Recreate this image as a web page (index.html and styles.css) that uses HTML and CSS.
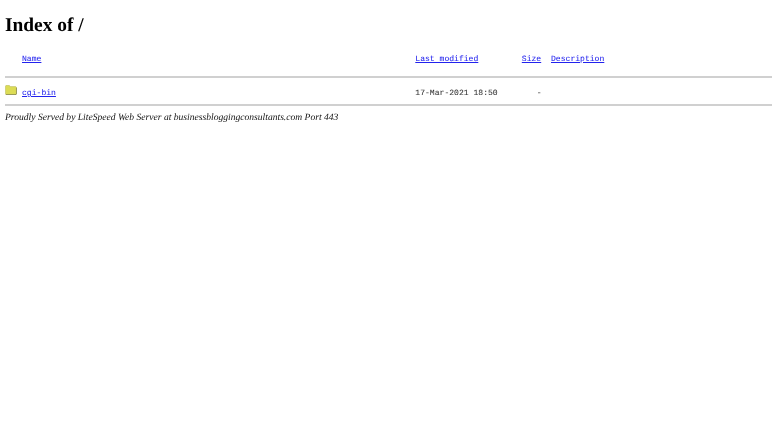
FILE: index.html
```html
<!DOCTYPE html>
<html lang="en">
<head>
<meta charset="utf-8">
<title>Index of /</title>
<link rel="stylesheet" href="styles.css">
</head>
<body>
<h1 class="title">Index of /</h1>
<div class="row head">
  <span class="icon-cell"></span>
  <a class="name" href="#">Name</a>
  <a class="modified" href="#">Last modified</a>
  <a class="size" href="#">Size</a>
  <a class="desc" href="#">Description</a>
</div>
<hr class="rule rule-top">
<div class="row entry">
  <span class="icon-cell">
    <svg class="folder" width="12" height="10" viewBox="0 0 13 11" aria-hidden="true">
      <path d="M.3 10V1.2L1.2.3h3.4l1 1.4h6l1 .9v7.4l-.6.6H.9z" fill="#dcdc55" stroke="#b0b060" stroke-width=".5"/>
      <path d="M12.5 3v7l-.5.5H1" fill="none" stroke="#86864a" stroke-width=".8"/>
    </svg>
  </span>
  <a class="name" href="#">cgi-bin</a>
  <span class="modified">17-Mar-2021 18:50</span>
  <span class="size dash">-</span>
  <span class="desc"></span>
</div>
<hr class="rule rule-bottom">
<address class="footer">Proudly Served by LiteSpeed Web Server at businessbloggingconsultants.com Port 443</address>
</body>
</html>
```
FILE: styles.css
```css
html, body { margin: 0; background: #fff; color: #000; }
body { min-height: 423px; box-sizing: border-box; padding: 0 5px; font-family: "Liberation Serif", serif; text-rendering: geometricPrecision; filter: blur(0.3px); }
.title { margin: 0; padding-top: 15px; font-size: 19.4px; line-height: 22px; font-weight: bold; }
.row {
  display: grid;
  grid-template-columns: 17px 393.3px 106.5px 29.2px 1fr;
  font-family: "Liberation Mono", monospace;
  font-size: 8.09px;
  line-height: 10px;
  color: #333;
  -webkit-text-stroke: 0.06px;
}
.row a { color: #22e; text-decoration: underline; }
.head { margin-top: 18px; }
.entry { margin-top: 11px; }
.icon-cell { display: flex; }
.folder { display: block; margin-top: -4px; }
.dash { padding-left: 15px; }
.rule { margin: 0; height: 2px; border: 0; background: #d0d0d0; }
.rule-top { margin-top: 11px; }
.rule-bottom { margin-top: 5px; }
.footer { margin-top: 5px; font-size: 9.58px; line-height: 13px; font-style: italic; color: #111; }
```
